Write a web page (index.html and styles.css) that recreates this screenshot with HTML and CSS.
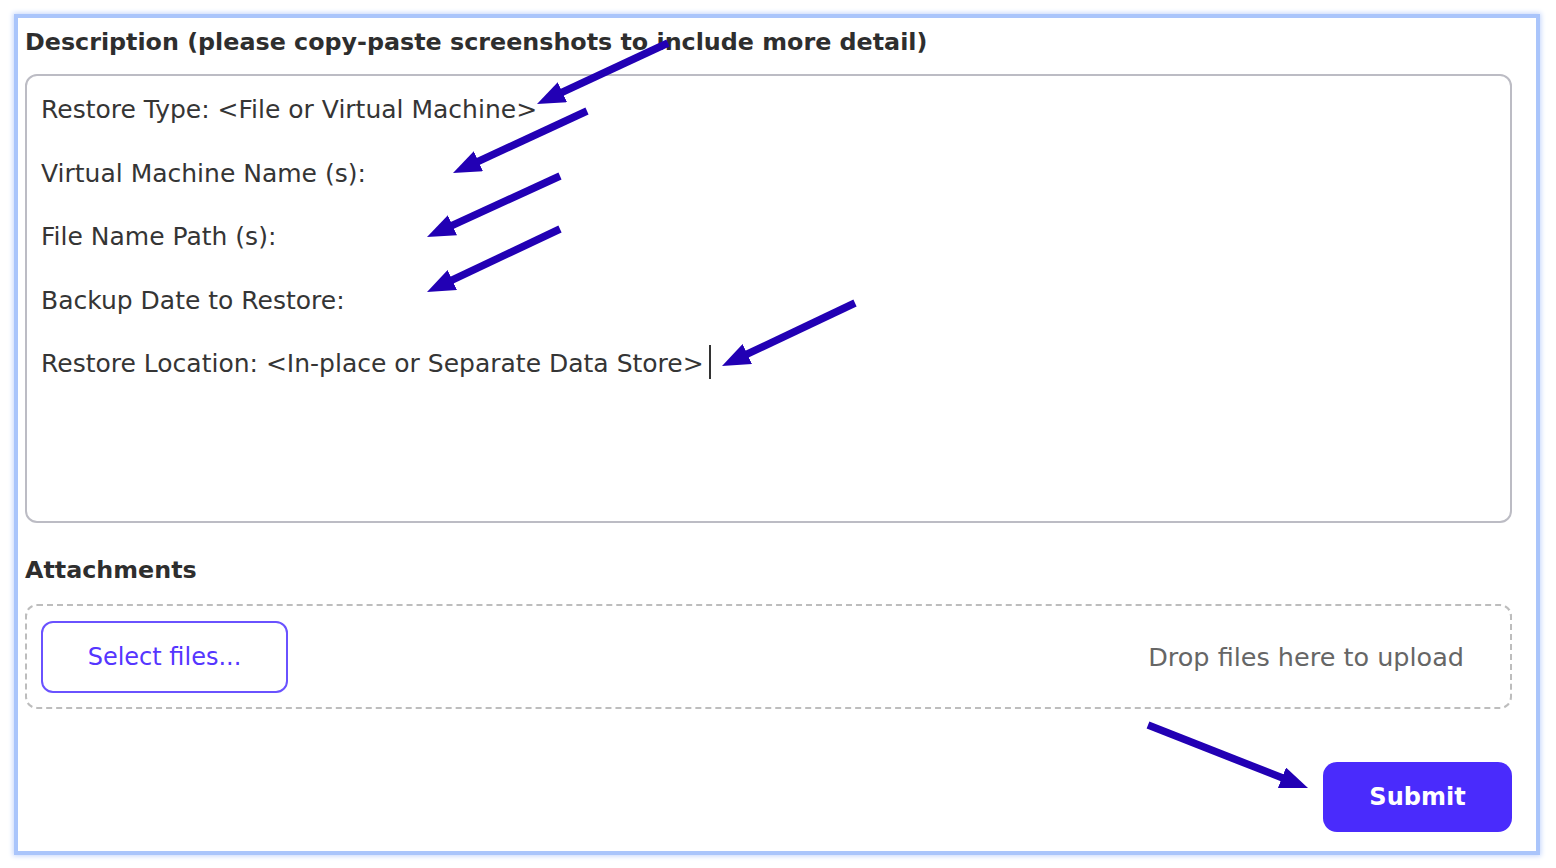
FILE: index.html
```html
<!DOCTYPE html>
<html lang="en">
<head>
    <meta charset="UTF-8">
    <title>Restore Request</title>
    <link rel="stylesheet" href="styles.css">
</head>
<body>
    <div class="panel">
        <label class="field-label">Description (please copy-paste screenshots to include more detail)</label>
        <div class="desc-box">
            <div>Restore Type: &lt;File or Virtual Machine&gt;</div>
            <div>Virtual Machine Name (s):</div>
            <div>File Name Path (s):</div>
            <div>Backup Date to Restore:</div>
            <div>Restore Location: &lt;In-place or Separate Data Store&gt;<span class="caret"></span></div>
        </div>

        <label class="field-label attach-label">Attachments</label>
        <div class="dropzone">
            <button class="select-btn">Select files...</button>
            <span class="drop-hint">Drop files here to upload</span>
        </div>

        <div class="actions">
            <button class="submit-btn">Submit</button>
        </div>
    </div>

    <!-- annotation arrows drawn over the form -->
    <svg class="arrows" width="1556" height="868" viewBox="0 0 1556 868">
        <defs>
            <marker id="head" viewBox="0 0 28 22" refX="28" refY="11" markerWidth="28" markerHeight="22" markerUnits="userSpaceOnUse" orient="auto">
                <path d="M0 0 L28 11 L0 22 Z" fill="#2200b4"/>
            </marker>
        </defs>
        <g stroke="#2200b4" stroke-width="7.5" fill="none">
            <path d="M668 43 L537 104" pathLength="100" stroke-dasharray="90 100" marker-end="url(#head)"/>
            <path d="M587 111 L453 173" pathLength="100" stroke-dasharray="90 100" marker-end="url(#head)"/>
            <path d="M560 176 L427 237" pathLength="100" stroke-dasharray="90 100" marker-end="url(#head)"/>
            <path d="M560 229 L427 292" pathLength="100" stroke-dasharray="90 100" marker-end="url(#head)"/>
            <path d="M855 303 L722 366" pathLength="100" stroke-dasharray="90 100" marker-end="url(#head)"/>
            <path d="M1148 725 L1308 788" pathLength="100" stroke-dasharray="91 100" marker-end="url(#head)"/>
        </g>
    </svg>
</body>
</html>
```

FILE: styles.css
```css
body {
    margin: 0;
    padding: 14px 16px 0 14px;
    background: #fff;
    font-family: 'DejaVu Sans', sans-serif;
    color: #333;
    position: relative;
    height: 868px;
    box-sizing: border-box;
    overflow: hidden;
}
.panel {
    border: 4px solid #aac5fb;
    box-shadow: 0 0 5px 1px #c4d6fc;
    height: 841px;
    box-sizing: border-box;
    padding: 6px 24px 0 6px;
    display: flex;
    flex-direction: column;
}
.field-label {
    display: block;
    font-size: 23.8px;
    font-weight: 700;
    color: #2e2e2e;
    line-height: 36px;
    padding-left: 1px;
}
.desc-box {
    margin-top: 14px;
    margin-left: 1px;
    height: 449px;
    box-sizing: border-box;
    border: 2px solid #bcbcc4;
    border-radius: 12px;
    padding: 2px 14px 0;
    font-size: 25px;
    line-height: 63.5px;
    color: #353535;
}
.caret {
    display: inline-block;
    width: 2px;
    height: 34px;
    background: #333;
    vertical-align: -7px;
    margin-left: 5px;
}
.attach-label {
    margin-top: 29px;
}
.dropzone {
    margin-top: 16px;
    margin-left: 1px;
    height: 105px;
    box-sizing: border-box;
    border: 2px dashed #bdbdbd;
    border-radius: 12px;
    padding: 0 46px 0 14px;
    display: flex;
    align-items: center;
    justify-content: space-between;
}
.select-btn {
    width: 247px;
    height: 72px;
    border: 2px solid #6a52ff;
    border-radius: 12px;
    background: #fff;
    color: #5536ff;
    font-family: inherit;
    font-size: 24px;
}
.drop-hint {
    font-size: 25.5px;
    color: #666;
}
.actions {
    display: flex;
    justify-content: flex-end;
    margin-top: 53px;
}
.submit-btn {
    width: 189px;
    height: 70px;
    border: none;
    border-radius: 14px;
    background: #4a2bfc;
    color: #fff;
    font-family: inherit;
    font-size: 24px;
    font-weight: 700;
}
.arrows {
    position: absolute;
    top: 0;
    left: 0;
    pointer-events: none;
}
```
